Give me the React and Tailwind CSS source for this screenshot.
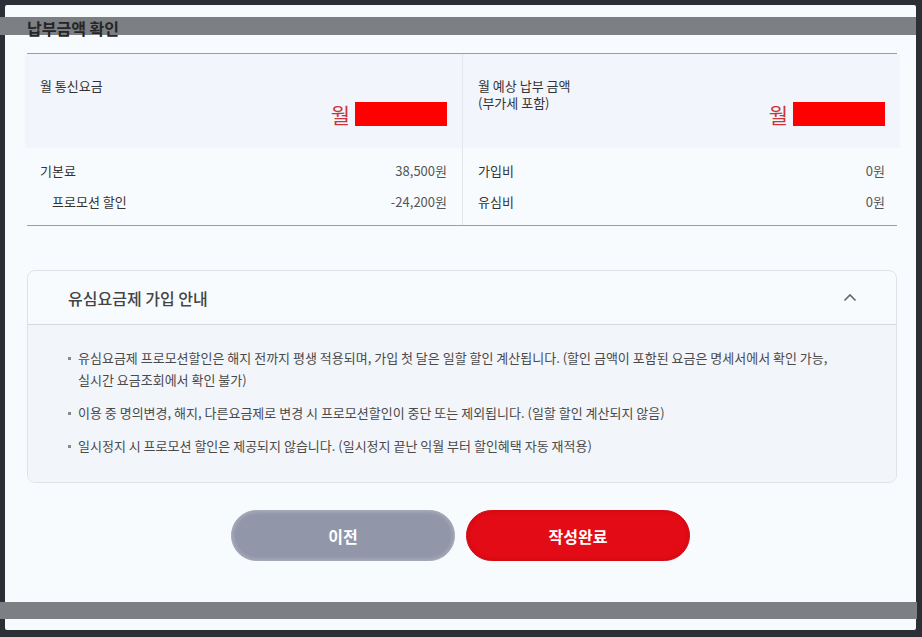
import React from 'react';

const FONT = { fontFamily: '"Noto Sans CJK KR", "Noto Sans", sans-serif' };

const SUMMARY = {
  left: {
    label: ['월 통신요금'],
    rows: [
      { name: '기본료', value: '38,500원' },
      { name: '프로모션 할인', value: '-24,200원', indent: true },
    ],
  },
  right: {
    label: ['월 예상 납부 금액', '(부가세 포함)'],
    rows: [
      { name: '가입비', value: '0원' },
      { name: '유심비', value: '0원' },
    ],
  },
};

const NOTICES = [
  ['유심요금제 프로모션할인은 해지 전까지 평생 적용되며, 가입 첫 달은 일할 할인 계산됩니다. (할인 금액이 포함된 요금은 명세서에서 확인 가능,', '실시간 요금조회에서 확인 불가)'],
  ['이용 중 명의변경, 해지, 다른요금제로 변경 시 프로모션할인이 중단 또는 제외됩니다. (일할 할인 계산되지 않음)'],
  ['일시정지 시 프로모션 할인은 제공되지 않습니다. (일시정지 끝난 익월 부터 할인혜택 자동 재적용)'],
];

// --- one half of the summary table ---
const SummaryColumn = ({ data, right }) => (
  <div className={right ? 'border-l border-[#e3e6eb] pl-[15px] pr-[12px]' : 'pl-[13px] pr-[15px]'}>
    <div className="-ml-[15px] -mr-[15px] flex h-[94px] justify-between bg-[#f2f5fb] px-[15px]">
      <div className="pt-[23px] text-[13px] leading-[17px] text-[#333]">
        {data.label.map((l) => (
          <div key={l}>{l}</div>
        ))}
      </div>
      <div className="flex items-center self-end pb-[22px]">
        <span className="text-[21px] leading-[24px] text-[#c9353a]">월</span>
        <span className="ml-[5px] h-[24px] w-[92px] bg-[#ff0000] blur-[0.6px]"></span>
      </div>
    </div>
    <div className="pt-[7px] pb-[8px]">
      {data.rows.map((r) => (
        <div key={r.name} className="flex h-[31px] items-center justify-between text-[13px]">
          <span className={`text-[#333] ${r.indent ? 'pl-[12px]' : ''}`}>{r.name}</span>
          <span className="text-[#555]">{r.value}</span>
        </div>
      ))}
    </div>
  </div>
);

const App = () => {
  return (
    <div style={FONT} className="relative h-[637px] w-[922px] overflow-hidden bg-[#2c2f36]">
      {/* overlay bars from the page behind */}
      <div className="absolute left-0 top-[17px] z-0 h-[18px] w-[916px] bg-[#7c7f83]"></div>
      <div className="absolute left-0 top-[602px] z-20 h-[17px] w-[917px] bg-[#7c7f83]"></div>

      <div className="ml-[5px] mt-[5px] h-[625px] w-[911px] rounded-[2px] bg-[#f8fbfe] px-[22px]">
        <h2 className="relative z-10 pt-[11px] text-[16px] font-bold leading-[24px] text-[#262626]">납부금액 확인</h2>

        <div className="mt-[13px] grid w-[870px] grid-cols-2 border-y border-[#c48f88]">
          <SummaryColumn data={SUMMARY.left} />
          <SummaryColumn data={SUMMARY.right} right />
        </div>

        <div className="mt-[44px] w-[870px] overflow-hidden rounded-[8px] border border-[#dfe3e9] bg-[#f8fbfe]">
          <div className="flex h-[54px] items-center justify-between border-b border-[#d5d9df] pl-[40px] pr-[39px]">
            <span className="text-[16px] font-medium text-[#444]">유심요금제 가입 안내</span>
            <svg width="14" height="9" viewBox="0 0 14 9" fill="none">
              <path d="M1.5 7.5L7 2l5.5 5.5" stroke="#666" strokeWidth="1.6" />
            </svg>
          </div>
          <ul className="bg-[#f2f5fa] pl-[40px] pr-[20px] pt-[22px] pb-[25px]">
            {NOTICES.map((lines, i) => (
              <li key={i} className={`flex text-[13px] leading-[22px] text-[#4a4a4a] ${i > 0 ? 'mt-[11px]' : ''}`}>
                <span className="mr-[7px] mt-[10px] h-[3px] w-[3px] shrink-0 bg-[#888]"></span>
                <span className="whitespace-nowrap">
                  {lines.map((l, j) => (
                    <div key={j}>{l}</div>
                  ))}
                </span>
              </li>
            ))}
          </ul>
        </div>

        <div className="mt-[27px] flex justify-center gap-[11px]">
          <button className="h-[51px] w-[224px] rounded-full border border-[#a3a8b8] bg-[#9197a9] text-[16px] font-bold text-white shadow-[inset_0_0_4px_rgba(255,255,255,0.35)]">
            이전
          </button>
          <button className="h-[51px] w-[224px] rounded-full border border-[#d40a14] bg-[#e30b15] text-[16px] font-bold text-white shadow-[inset_0_0_4px_rgba(150,0,0,0.35)]">
            작성완료
          </button>
        </div>
      </div>
    </div>
  );
};

export default App;
